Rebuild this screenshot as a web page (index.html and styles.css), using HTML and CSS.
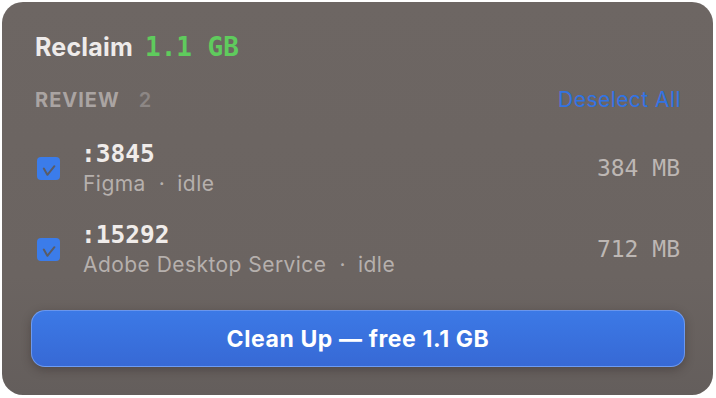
FILE: index.html
```html
<!DOCTYPE html>
<html>
<head>
<meta charset="utf-8">
<link rel="stylesheet" href="styles.css">
</head>
<body>
<div class="panel">
  <div class="title"><span class="title-word">Reclaim</span><span class="title-size">1.1 GB</span></div>
  <div class="section-head">
    <div class="section-label">REVIEW<span class="count">2</span></div>
    <div class="deselect">Deselect All</div>
  </div>
  <div class="rows">
    <div class="row">
      <div class="check"><svg viewBox="0 0 23 23" width="23" height="23"><path d="M6.8 11.6 L10.4 17.8 L17.4 9.2" fill="none" stroke="#5a5c66" stroke-width="2" stroke-linecap="round" stroke-linejoin="round"/></svg></div>
      <div class="info">
        <div class="port">:3845</div>
        <div class="meta">Figma<span class="dot">·</span>idle</div>
      </div>
      <div class="mem">384 MB</div>
    </div>
    <div class="row">
      <div class="check"><svg viewBox="0 0 23 23" width="23" height="23"><path d="M6.8 11.6 L10.4 17.8 L17.4 9.2" fill="none" stroke="#5a5c66" stroke-width="2" stroke-linecap="round" stroke-linejoin="round"/></svg></div>
      <div class="info">
        <div class="port">:15292</div>
        <div class="meta">Adobe Desktop Service<span class="dot">·</span>idle</div>
      </div>
      <div class="mem">712 MB</div>
    </div>
  </div>
  <div class="button">Clean Up — free 1.1 GB</div>
</div>
</body>
</html>
```

FILE: styles.css
```css
html, body {
  margin: 0;
  padding: 0;
  background: #ffffff;
}
body {
  padding: 2px;
  font-family: Inter, "Liberation Sans", sans-serif;
}
.panel {
  box-sizing: border-box;
  width: 711px;
  height: 393px;
  border-radius: 21px;
  background: linear-gradient(180deg, #6d6663 0%, #6b6461 70%, #645e5c 100%);
  padding: 30px 28px 0 29px;
  display: flex;
  flex-direction: column;
}
.title {
  padding: 0 4px;
  line-height: 30px;
  height: 30px;
  white-space: nowrap;
}
.title-word {
  font-size: 25px;
  font-weight: 700;
  color: #eeebea;
  letter-spacing: 0.2px;
}
.title-size {
  font-family: "DejaVu Sans Mono", "Liberation Mono", monospace;
  font-size: 26px;
  font-weight: 700;
  color: #5fcb5d;
  margin-left: 12px;
}
.section-head {
  margin-top: 26px;
  padding: 0 4px 0 4px;
  display: flex;
  justify-content: space-between;
  align-items: center;
  line-height: 24px;
  height: 24px;
}
.section-label {
  font-size: 20px;
  font-weight: 700;
  color: #aaa4a2;
  letter-spacing: 1px;
}
.count {
  margin-left: 19px;
  color: #8d8785;
  font-weight: 600;
}
.deselect {
  font-size: 21px;
  color: #3273e3;
  letter-spacing: 0.45px;
}
.rows {
  margin-top: 26px;
  display: flex;
  flex-direction: column;
  gap: 21px;
  padding: 0 5px 0 6px;
}
.row {
  display: flex;
  align-items: center;
  height: 60px;
}
.check {
  width: 23px;
  height: 23px;
  border-radius: 4px;
  background: #3b7cea;
  flex: none;
  display: flex;
}
.info {
  margin-left: 23px;
  flex: 1;
}
.port {
  font-family: "DejaVu Sans Mono", "Liberation Mono", monospace;
  font-size: 24.5px;
  font-weight: 700;
  line-height: 31px;
  color: #f0ecea;
  margin-left: -2px;
}
.meta {
  margin-top: 1px;
  font-size: 21px;
  line-height: 28px;
  color: #b6b0ad;
  letter-spacing: 0.45px;
}
.dot {
  margin: 0 12px 0 13px;
}
.mem {
  font-family: "DejaVu Sans Mono", "Liberation Mono", monospace;
  font-size: 23px;
  color: #bdb7b4;
  line-height: 28px;
}
.button {
  margin-top: 31px;
  height: 57px;
  box-sizing: border-box;
  border-radius: 14px;
  background: linear-gradient(180deg, #3c79e6 0%, #3769d5 100%);
  border: 1px solid rgba(150, 185, 255, 0.55);
  box-shadow: 0 3px 10px rgba(40, 30, 30, 0.35);
  display: flex;
  align-items: center;
  justify-content: center;
  color: #ffffff;
  font-size: 23px;
  font-weight: 700;
  letter-spacing: 0.6px;
}
```
